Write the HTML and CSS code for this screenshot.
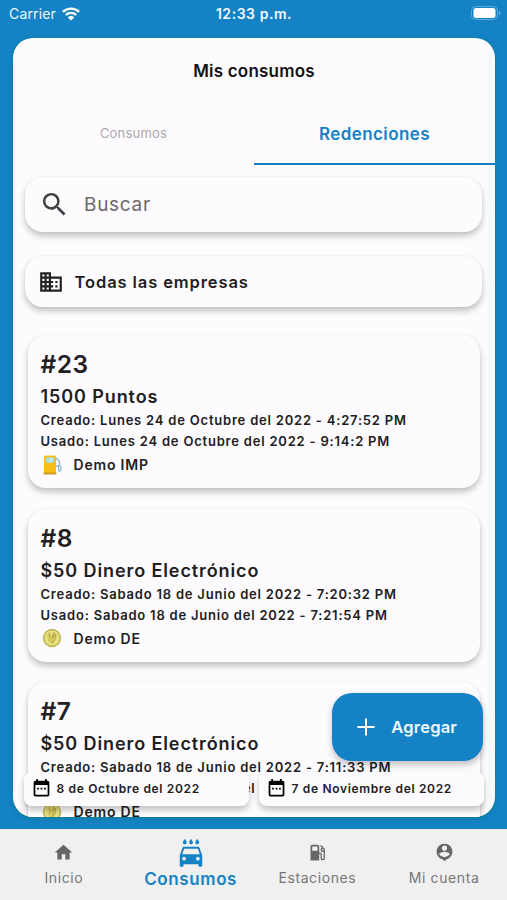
FILE: index.html
```html
<!DOCTYPE html>
<html lang="es">
<head>
<meta charset="utf-8">
<title>Mis consumos</title>
<link rel="stylesheet" href="styles.css">
</head>
<body>
<svg class="defs" width="0" height="0" aria-hidden="true">
  <symbol id="coin" viewBox="0 0 20 20">
    <circle cx="10" cy="10" r="9.2" fill="#c4b955"/>
    <circle cx="10" cy="10" r="8" fill="#e9e083" stroke="#b5aa4c" stroke-width=".6"/>
    <path d="M5 7l3-3 1 4 3-4 3 2-1 6-4 4-4-3z" fill="#d6ca60"/>
    <path d="M7 5l1.500 5M11.500 4.500l-1 5 3-3.500-.5 5-3 4" fill="none" stroke="#aea044" stroke-width=".9"/>
  </symbol>
  <symbol id="calendar" viewBox="0 0 24 24">
    <path d="M7 11h2v2H7zm4 0h2v2h-2zm4 0h2v2h-2zm4-8h-1V1h-2v2H8V1H6v2H5a2 2 0 0 0-2 2v14a2 2 0 0 0 2 2h14a2 2 0 0 0 2-2V5a2 2 0 0 0-2-2zm0 16H5V8h14z"/>
  </symbol>
</svg>
<div class="app">
  <header class="status">
    <div class="carrier"><span>Carrier</span>
      <svg width="18" height="14" viewBox="0 0 18 14"><g fill="none" stroke="#fff" stroke-width="2.3"><path d="M.9 4.9a11.5 11.5 0 0 1 16.2 0"/><path d="M3.800 8a7.400 7.400 0 0 1 10.400 0"/></g><path d="M9 13.600L5.800 10.400a4.500 4.500 0 0 1 6.400 0z" fill="#fff"/></svg>
    </div>
    <div class="clock">12:33 p.m.</div>
    <svg class="battery" width="30" height="14" viewBox="0 0 30 14"><rect x=".5" y=".5" width="26" height="13" rx="4" fill="none" stroke="#5ea8d8"/><rect x="2.500" y="2" width="22" height="10" rx="2.500" fill="#fff"/><path d="M28 4.500q1.700 1 1.700 2.500T28 9.500z" fill="#5ea8d8"/></svg>
  </header>
  <main class="sheet">
    <h1 class="title">Mis consumos</h1>
    <nav class="tabs">
      <div class="tab">Consumos</div>
      <div class="tab tab-active">Redenciones</div>
    </nav>
    <div class="field search">
      <svg width="31" height="31" viewBox="0 0 24 24" fill="#424144"><path d="M15.500 14h-.79l-.28-.27A6.470 6.470 0 0 0 16 9.500 6.500 6.500 0 1 0 9.500 16c1.610 0 3.090-.59 4.230-1.570l.27.28v.79l5 4.990L20.490 19l-4.990-5zm-6 0C7.010 14 5 11.990 5 9.500S7.010 5 9.500 5 14 7.010 14 9.500 11.990 14 9.500 14z"/></svg>
      <span>Buscar</span>
    </div>
    <div class="field company">
      <svg width="26" height="26" viewBox="0 0 24 24" fill="#222"><path d="M12 7V3H2v18h20V7H12zM6 19H4v-2h2v2zm0-4H4v-2h2v2zm0-4H4V9h2v2zm0-4H4V5h2v2zm4 12H8v-2h2v2zm0-4H8v-2h2v2zm0-4H8V9h2v2zm0-4H8V5h2v2zm10 12h-8v-2h2v-2h-2v-2h2v-2h-2V9h8v10zm-2-8h-2v2h2v-2zm0 4h-2v2h2v-2z"/></svg>
      <span>Todas las empresas</span>
    </div>
    <section class="list">
      <article class="item">
        <h2 class="number">#23</h2>
        <div class="amount">1500 Puntos</div>
        <div class="date">Creado: Lunes 24 de Octubre del 2022 - 4:27:52 PM</div>
        <div class="date used">Usado: Lunes 24 de Octubre del 2022 - 9:14:2 PM</div>
        <div class="demo">
          <svg width="20" height="20" viewBox="0 0 20 20"><path d="M2 2q0-1.500 1.500-1.500h9Q14 .5 14 2v16H2z" fill="#f8bd16"/><path d="M4 2.500h8V7q-4 2-8 0z" fill="#a9dde8"/><path d="M7.500 6.500L10 3" stroke="#fff"/><path d="M1.500 17.500h13v2h-13z" fill="#d99b20"/><path d="M14 3l3.500 3.500V10l1.500 2v3q-1 2-2.500 0v-4H14" fill="none" stroke="#8db8cb" stroke-width="1.300"/></svg>
          <span>Demo IMP</span>
        </div>
      </article>
      <article class="item">
        <h2 class="number">#8</h2>
        <div class="amount">$50 Dinero Electrónico</div>
        <div class="date">Creado: Sabado 18 de Junio del 2022 - 7:20:32 PM</div>
        <div class="date used">Usado: Sabado 18 de Junio del 2022 - 7:21:54 PM</div>
        <div class="demo"><svg width="20" height="20"><use href="#coin"/></svg><span>Demo DE</span></div>
      </article>
      <article class="item">
        <h2 class="number">#7</h2>
        <div class="amount">$50 Dinero Electrónico</div>
        <div class="date">Creado: Sabado 18 de Junio del 2022 - 7:11:33 PM</div>
        <div class="date used">Usado: Sabado 18 de Junio del</div>
        <div class="demo"><svg width="20" height="20"><use href="#coin"/></svg><span>Demo DE</span></div>
      </article>
    </section>
    <button class="add"><svg width="18" height="18" viewBox="0 0 18 18"><path d="M9 .5v17M.5 9h17" stroke="#fff" stroke-width="2"/></svg><span>Agregar</span></button>
    <div class="range">
      <div class="day"><svg width="21" height="21"><use href="#calendar"/></svg><span>8 de Octubre del 2022</span></div>
      <div class="day"><svg width="21" height="21"><use href="#calendar"/></svg><span>7 de Noviembre del 2022</span></div>
    </div>
  </main>
  <nav class="bottom">
    <div class="link"><svg width="21" height="21" viewBox="0 0 24 24"><path d="M10 20v-6h4v6h5v-8h3L12 3 2 12h3v8z"/></svg><span>Inicio</span></div>
    <div class="link link-active"><svg width="30" height="30" viewBox="0 0 24 24"><path d="M17 5c.830 0 1.500-.67 1.500-1.500 0-1-1.500-2.700-1.500-2.700s-1.500 1.700-1.500 2.700c0 .83.67 1.500 1.500 1.500zm-5 0c.83 0 1.500-.67 1.500-1.500 0-1-1.500-2.700-1.500-2.700s-1.500 1.700-1.500 2.700c0 .83.67 1.500 1.500 1.500zM7 5c.83 0 1.500-.67 1.500-1.500C8.500 2.500 7 .8 7 .8S5.500 2.500 5.500 3.500C5.500 4.330 6.170 5 7 5zm11.920 3.010C18.720 7.420 18.160 7 17.500 7h-11c-.66 0-1.210.42-1.420 1.010L3 14v8c0 .55.45 1 1 1h1c.55 0 1-.45 1-1v-1h12v1c0 .55.45 1 1 1h1c.55 0 1-.45 1-1v-8l-2.080-5.990zM6.500 18c-.83 0-1.500-.67-1.500-1.500S5.670 15 6.500 15s1.500.67 1.500 1.500S7.330 18 6.500 18zm11 0c-.83 0-1.500-.67-1.500-1.500s.67-1.500 1.500-1.500 1.500.67 1.500 1.500-.67 1.500-1.500 1.500zM5 13l1.500-4.500h11L19 13H5z"/></svg><span>Consumos</span></div>
    <div class="link"><svg width="21" height="21" viewBox="0 0 24 24"><path d="M19.770 7.230l.01-.01-3.720-3.720L15 4.560l2.110 2.110c-.94.36-1.610 1.260-1.610 2.330a2.500 2.500 0 0 0 3.500 2.290v7.210c0 .55-.45 1-1 1s-1-.45-1-1V14c0-1.100-.9-2-2-2h-1V5c0-1.100-.9-2-2-2H6c-1.100 0-2 .9-2 2v16h10v-7.500h1.500v5a2.500 2.500 0 0 0 5 0V9c0-.69-.28-1.320-.73-1.770zM12 10H6V5h6v5zm6 0c-.55 0-1-.45-1-1s.45-1 1-1 1 .45 1 1-.45 1-1 1z"/></svg><span>Estaciones</span></div>
    <div class="link"><svg width="21" height="21" viewBox="0 0 24 24"><path d="M12 2C7.030 2 3 6.030 3 11c0 4.170 2.840 7.670 6.690 8.690L12 22l2.310-2.310C18.160 18.670 21 15.170 21 11c0-4.970-4.030-9-9-9zm0 2c1.660 0 3 1.340 3 3s-1.340 3-3 3-3-1.340-3-3 1.340-3 3-3zm0 13.300c-2.500 0-4.710-1.280-6-3.220.03-1.990 4-3.080 6-3.080 1.990 0 5.970 1.090 6 3.080a7.200 7.200 0 0 1-6 3.220z"/></svg><span>Mi cuenta</span></div>
  </nav>
</div>
</body>
</html>
```
FILE: styles.css
```css
* { box-sizing: border-box; }
body { margin: 0; font-family: Inter, "Liberation Sans", sans-serif; color: #202022; }
h1, h2 { margin: 0; font-weight: 600; }
svg { flex: none; display: block; }
span { white-space: nowrap; }
.defs { position: absolute; }
.app { width: 507px; height: 900px; background: #1482c5; display: flex; flex-direction: column; overflow: hidden; }

.status { height: 38px; padding: 6px 6px 0 9px; display: grid; grid-template-columns: 1fr auto 1fr; align-items: start; color: #eef8ff; }
.carrier { display: flex; align-items: center; gap: 6px; height: 15px; font-size: 14px; letter-spacing: .15px; }
.clock { font-size: 14px; line-height: 16px; font-weight: 600; letter-spacing: .55px; margin-right: 2px; }
.battery { justify-self: end; }

.sheet { position: relative; width: 482px; height: 779px; margin-left: 13px; background: #fefbff; border-radius: 20px; overflow: hidden; flex: none; box-shadow: 0 1px 4px #0758; }
.title { height: 66px; line-height: 67px; text-align: center; font-size: 17px; color: #111; letter-spacing: .2px; }
.tabs { display: grid; grid-template-columns: 1fr 1fr; height: 60px; }
.tab { text-align: center; line-height: 59px; font-size: 13px; color: #aaa8ac; letter-spacing: .2px; }
.tab-active { line-height: 58px; padding-top: 1px; height: 61px; font-size: 17px; font-weight: 600; color: #1482c5; border-bottom: 2px solid #1482c5; letter-spacing: .4px; }

.field, .item { background: #fefbff; border-radius: 18px; box-shadow: 0 4px 6px rgba(0,0,0,.23), 0 0 2px rgba(0,0,0,.07); }
.field { width: 457px; margin-left: 12px; display: flex; align-items: center; }
.search { height: 55px; margin-top: 13px; padding-left: 14px; gap: 14px; font-size: 19px; color: #6b696d; letter-spacing: .7px; }
.company { height: 51px; margin-top: 24px; padding-left: 13px; gap: 10.500px; font-size: 16.500px; font-weight: 600; letter-spacing: .9px; }

.list { padding: 28px 15px 0; display: flex; flex-direction: column; gap: 20.500px; }
.item { height: 153px; padding: 11px 12.500px 0; font-weight: 600; flex: none; }
.number { font-size: 24.500px; line-height: 37px; letter-spacing: .5px; }
.amount { font-size: 18px; line-height: 28px; letter-spacing: .9px; }
.date { font-size: 13px; line-height: 19px; letter-spacing: .79px; white-space: nowrap; }
.used { line-height: 22px; }
.demo { height: 25px; display: flex; align-items: center; gap: 12px; padding-left: 1px; font-size: 14px; letter-spacing: .8px; }

.add { position: absolute; left: 319px; top: 654.500px; width: 150.500px; height: 68px; border: 0; border-radius: 20px; background: #1482c5; color: #eef8ff; display: flex; align-items: center; justify-content: center; gap: 16px; font: 600 16.500px Inter, sans-serif; letter-spacing: .2px; box-shadow: 0 4px 6px rgba(0,0,0,.23); }
.range { position: absolute; left: 11px; top: 733.500px; display: flex; gap: 10px; }
.day { width: 225px; height: 34px; padding-left: 7px; display: flex; align-items: center; gap: 4.500px; background: #fefbff; border-radius: 8px; font-size: 12px; font-weight: 600; letter-spacing: .67px; box-shadow: 0 4px 6px rgba(0,0,0,.23); }

.bottom { margin-top: 12px; height: 71px; background: #f0f0f0; display: grid; grid-template-columns: repeat(4, 1fr); flex: none; }
.link { display: flex; flex-direction: column; align-items: center; padding: 13px 0 0 1px; gap: 6px; font-size: 14px; line-height: 18px; color: #777; fill: #666; letter-spacing: .6px; }
.link-active { padding-top: 9px; gap: 2px; color: #1482c5; fill: #1482c5; font-size: 17px; font-weight: 600; }
```
